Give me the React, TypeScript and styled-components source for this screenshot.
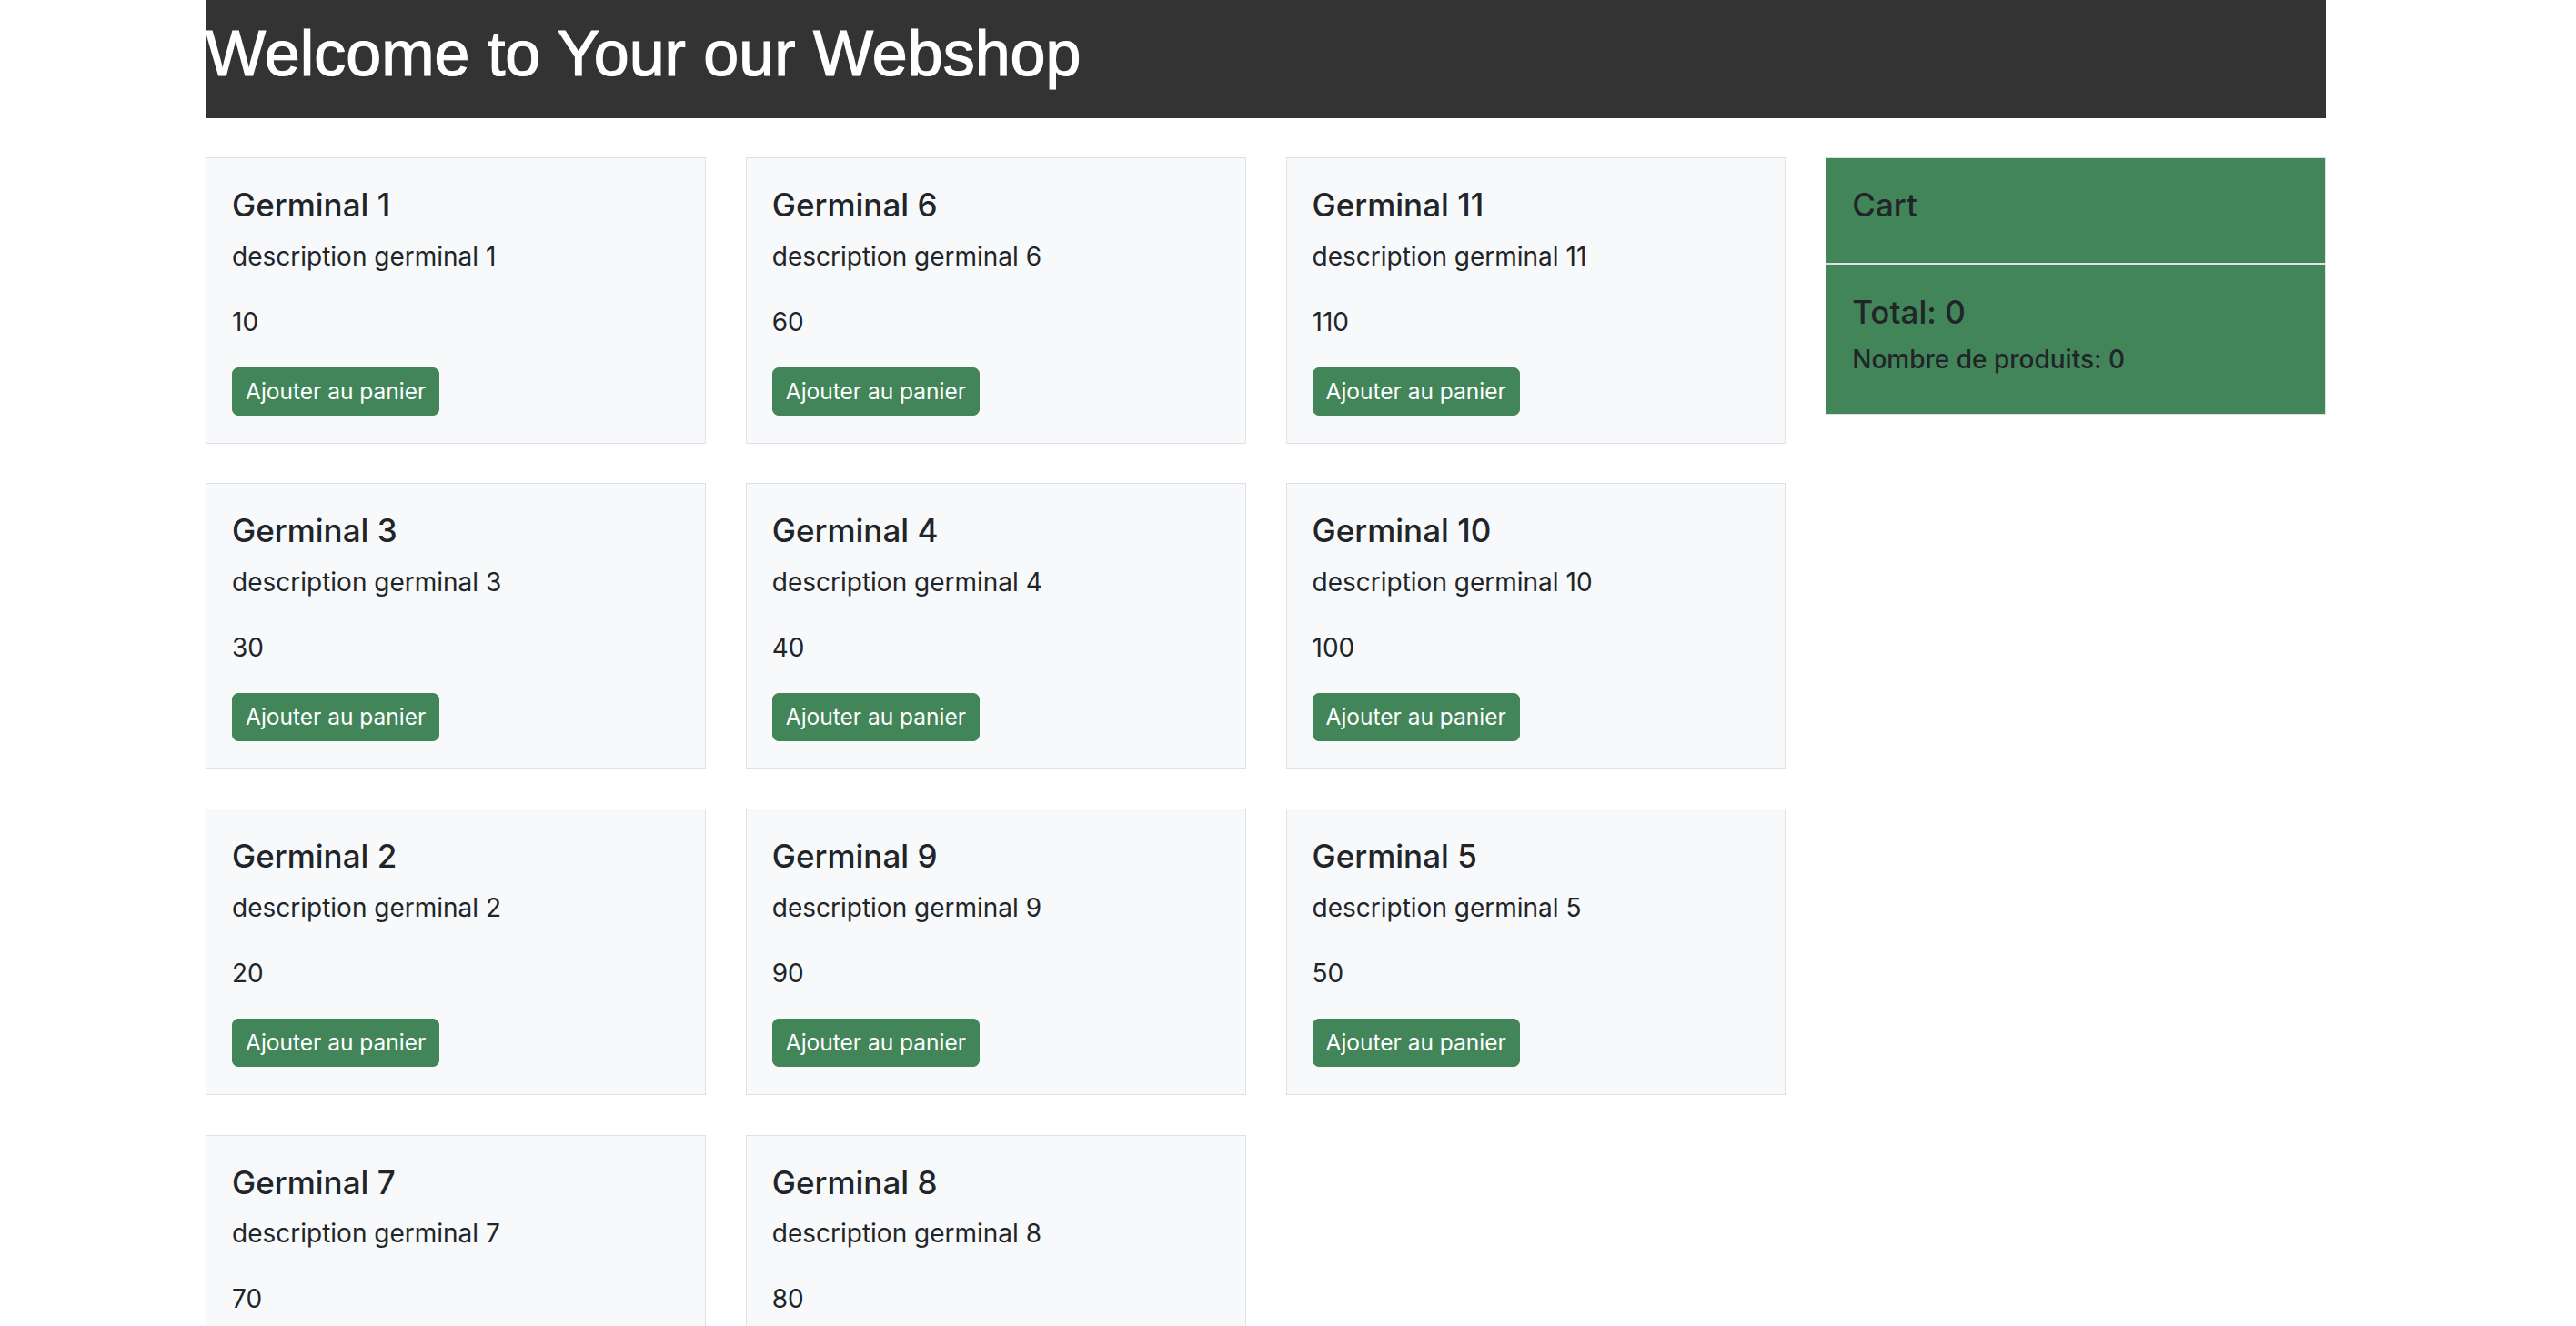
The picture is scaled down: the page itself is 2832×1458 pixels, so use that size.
import React from "react";
import styled, { createGlobalStyle } from "styled-components";

const GlobalStyle = createGlobalStyle`
  * { box-sizing: border-box; }
  html, body { margin: 0; padding: 0; background: #ffffff; }
  body {
    font-family: Inter, "Noto Sans", "Liberation Sans", sans-serif;
    font-size: 28px;
    line-height: 1.5;
    color: #212529;
  }
`;

const Container = styled.div`
  width: 2331px;
  margin-left: 226px;
`;

const Banner = styled.header`
  background: #333333;
  height: 130px;
  padding-top: 17px;
`;

const BannerTitle = styled.h1`
  margin: 0;
  font-family: "Liberation Sans", Arial, sans-serif;
  font-size: 70px;
  line-height: 84px;
  font-weight: 400;
  color: #ffffff;
  -webkit-text-stroke: 1.2px #ffffff;
`;

const Main = styled.main`
  display: grid;
  grid-template-columns: minmax(0, 1fr) 549.75px;
  column-gap: 44px;
  margin-top: 43px;
  align-items: start;
`;

const ProductGrid = styled.section`
  display: grid;
  grid-template-columns: repeat(3, minmax(0, 1fr));
  column-gap: 44px;
  row-gap: 43.3px;
`;

const ProductCard = styled.article`
  background: #f8f9fa;
  border: 1px solid #dee2e6;
  padding: 30px 28px 30px;
`;

const CardTitle = styled.h5`
  margin: 0 0 14.5px;
  font-size: 35px;
  line-height: 42px;
  font-weight: 500;
  color: #212529;
`;

const CardText = styled.p<{ $gap: number }>`
  margin: 0 0 ${(p) => p.$gap}px;
  font-size: 28px;
  line-height: 42px;
`;

const AddButton = styled.button`
  display: inline-block;
  background: #428559;
  border: 1px solid #428559;
  color: #ffffff;
  font-family: Inter, "Noto Sans", sans-serif;
  font-size: 24.5px;
  line-height: 36.75px;
  padding: 7.35px 14px;
  border-radius: 7px;
  cursor: pointer;
`;

const CartCard = styled.aside`
  background: #428559;
  border: 1px solid #dee2e6;
`;

const CartHeader = styled.div`
  padding: 30px 28px 29px;
  border-bottom: 2px solid #dee2e6;
`;

const CartTitle = styled.h5`
  margin: 0 0 14px;
  font-size: 35px;
  line-height: 42px;
  font-weight: 500;
  color: #212529;
`;

const CartBody = styled.div`
  padding: 31px 28px 39px;
`;

const CartTotal = styled.h5`
  margin: 0 0 10px;
  font-size: 35px;
  line-height: 42px;
  font-weight: 500;
  color: #212529;
`;

const CartCount = styled.p`
  margin: 0;
  font-size: 28px;
  line-height: 42px;
  font-weight: 500;
  color: #212529;
`;

const order = [1, 6, 11, 3, 4, 10, 2, 9, 5, 7, 8];

export default function App() {
  return (
    <>
      <GlobalStyle />
      <Container>
        <Banner>
          <BannerTitle>Welcome to Your our Webshop</BannerTitle>
        </Banner>
        <Main>
          <ProductGrid>
            {order.map((n) => (
              <ProductCard key={n}>
                <CardTitle>Germinal {n}</CardTitle>
                <CardText $gap={30}>description germinal {n}</CardText>
                <CardText $gap={29}>{n * 10}</CardText>
                <AddButton>Ajouter au panier</AddButton>
              </ProductCard>
            ))}
          </ProductGrid>
          <CartCard>
            <CartHeader>
              <CartTitle>Cart</CartTitle>
            </CartHeader>
            <CartBody>
              <CartTotal>Total: 0</CartTotal>
              <CartCount>Nombre de produits: 0</CartCount>
            </CartBody>
          </CartCard>
        </Main>
      </Container>
    </>
  );
}
